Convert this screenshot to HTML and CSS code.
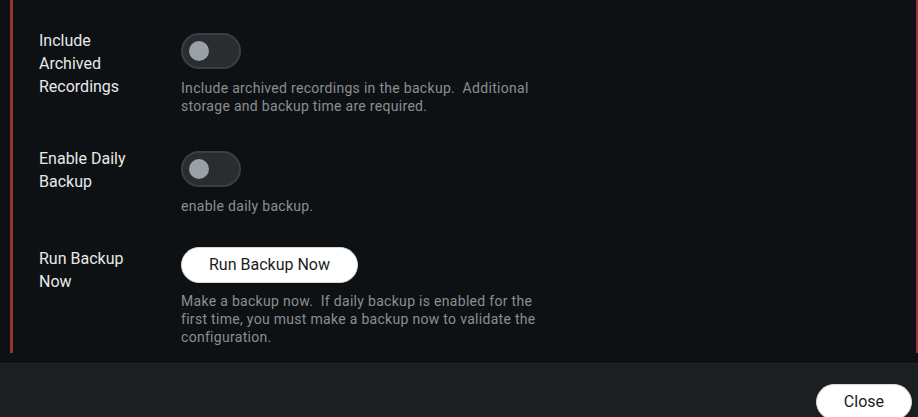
FILE: index.html
```html
<!DOCTYPE html>
<html lang="en">
<head>
<meta charset="utf-8">
<title>Backup settings</title>
<link rel="stylesheet" href="styles.css">
</head>
<body>
<div class="page">
  <div class="content">
    <div class="panel">
      <div class="row">
        <div class="label">Include<br>Archived<br>Recordings</div>
        <div class="control">
          <div class="switch"><span class="knob"></span></div>
          <p class="desc">Include archived recordings in the backup.&nbsp; Additional<br>storage and backup time are required.</p>
        </div>
      </div>
      <div class="row">
        <div class="label">Enable Daily<br>Backup</div>
        <div class="control">
          <div class="switch"><span class="knob"></span></div>
          <p class="desc">enable daily backup.</p>
        </div>
      </div>
      <div class="row">
        <div class="label">Run Backup<br>Now</div>
        <div class="control">
          <button class="btn">Run Backup Now</button>
          <p class="desc desc-btn">Make a backup now.&nbsp; If daily backup is enabled for the<br>first time, you must make a backup now to validate the<br>configuration.</p>
        </div>
      </div>
    </div>
  </div>
  <div class="footer">
    <button class="btn">Close</button>
  </div>
</div>
</body>
</html>
```
FILE: styles.css
```css
* { box-sizing: border-box; }
html, body {
  margin: 0;
  padding: 0;
  background: #0e1114;
  font-family: Roboto, "Liberation Sans", sans-serif;
  overflow: hidden;
}
.page {
  width: 918px;
  height: 417px;
  display: flex;
  flex-direction: column;
}
.content {
  padding: 0 0 10px 10px;
}
.panel {
  height: 353px;
  border-left: 3px solid #9a3434;
  border-right: 2px solid #9a3434;
  padding: 29px 0 0 26px;
  display: flex;
  flex-direction: column;
  gap: 32px;
}
.row {
  display: grid;
  grid-template-columns: 142px 1fr;
}
.label {
  color: #e8e8e8;
  font-size: 16px;
  line-height: 23px;
}
.control {
  display: flex;
  flex-direction: column;
  align-items: flex-start;
}
.switch {
  margin-top: 4px;
  width: 60px;
  height: 36px;
  border-radius: 18px;
  background: #2a2d30;
  border: 2px solid #3a3d41;
  display: flex;
  align-items: center;
  padding-left: 6px;
}
.knob {
  width: 20px;
  height: 20px;
  border-radius: 50%;
  background: #9aa0a7;
}
.desc {
  margin: 10px 0 0;
  color: #8a8e93;
  font-size: 14px;
  line-height: 18px;
  letter-spacing: 0.3px;
}
.desc-btn { margin-top: 9px; }
.btn {
  font-family: Roboto, "Liberation Sans", sans-serif;
  font-size: 16px;
  color: #1c1c1c;
  background: #ffffff;
  border: 1px solid #d8d8d8;
  border-radius: 18px;
  height: 36px;
  padding: 0 27px;
  line-height: 34px;
  cursor: pointer;
}
.footer {
  flex: 1;
  background: #1b1f22;
  border-top: 1px solid #22272a;
  display: flex;
  justify-content: flex-end;
  align-items: flex-start;
  padding: 20px 6px 0 0;
}
```
